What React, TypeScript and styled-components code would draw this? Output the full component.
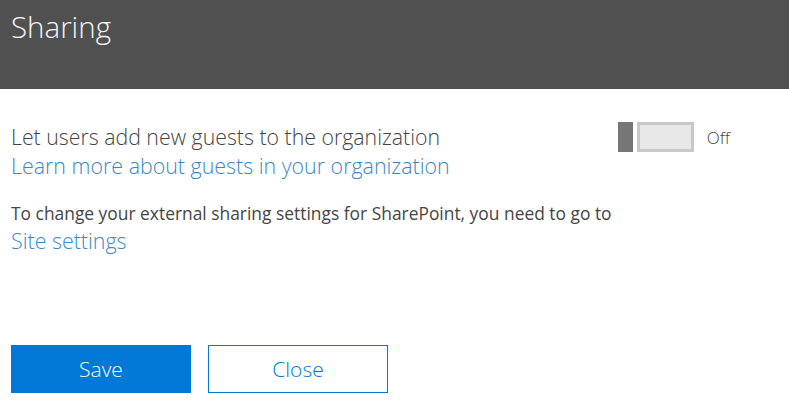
import React from "react";
import styled, { createGlobalStyle } from "styled-components";

const Global = createGlobalStyle`
  html, body { margin: 0; padding: 0; background: #ffffff; }
  body { font-family: "Open Sans", "Noto Sans", sans-serif; }
`;

const Page = styled.div`
  width: 789px;
  height: 411px;
  display: flex;
  flex-direction: column;
  background: #fff;
  overflow: hidden;
`;

const Header = styled.header`
  height: 89px;
  background: #505050;
  padding: 7px 11px 0;
  box-sizing: border-box;
`;

const Title = styled.h1`
  margin: 0;
  font-size: 29.5px;
  font-weight: 300;
  line-height: 40px;
  color: #f4f4f4;
`;

const Body = styled.div`
  padding: 33px 11px 0;
  display: flex;
  flex-direction: column;
`;

const SettingRow = styled.div`
  display: flex;
  align-items: flex-start;
  justify-content: space-between;
  width: 719px;
`;

const Texts = styled.div`
  display: flex;
  flex-direction: column;
`;

const Label = styled.div`
  font-size: 21.3px;
  font-weight: 300;
  line-height: 29px;
  color: #444;
`;

const Link = styled.a`
  font-size: 21.4px;
  font-weight: 300;
  line-height: 29px;
  color: #3a87cc;
  text-decoration: none;
`;

const ToggleWrap = styled.div`
  display: flex;
  align-items: center;
  gap: 13px;
`;

const Toggle = styled.div`
  display: flex;
  gap: 4px;
  height: 30px;
`;

const Thumb = styled.div`
  width: 15px;
  background: #767676;
`;

const Track = styled.div`
  width: 57px;
  box-sizing: border-box;
  border: 3px solid #c8c8c8;
  background: #e8e8e8;
`;

const ToggleLabel = styled.span`
  font-size: 17px;
  font-weight: 300;
  color: #444;
`;

const Note = styled.div`
  margin-top: 20px;
  font-size: 17.4px;
  font-weight: 400;
  line-height: 26px;
  color: #454545;
`;

const Actions = styled.div`
  margin-top: auto;
  padding: 0 11px 18px;
  display: flex;
  gap: 17px;
`;

const Button = styled.button<{ $primary?: boolean }>`
  width: 180px;
  height: 48px;
  box-sizing: border-box;
  font-family: inherit;
  font-size: 21px;
  font-weight: 300;
  cursor: pointer;
  border: 1px solid #0078d7;
  background: ${(p) => (p.$primary ? "#0078d7" : "#ffffff")};
  color: ${(p) => (p.$primary ? "#ffffff" : "#0078d7")};
`;

export default function App() {
  return (
    <Page>
      <Global />
      <Header>
        <Title>Sharing</Title>
      </Header>
      <Body>
        <SettingRow>
          <Texts>
            <Label>Let users add new guests to the organization</Label>
            <Link href="#">Learn more about guests in your organization</Link>
          </Texts>
          <ToggleWrap>
            <Toggle>
              <Thumb />
              <Track />
            </Toggle>
            <ToggleLabel>Off</ToggleLabel>
          </ToggleWrap>
        </SettingRow>
        <Note>To change your external sharing settings for SharePoint, you need to go to</Note>
        <Link href="#">Site settings</Link>
      </Body>
      <Actions>
        <Button $primary>Save</Button>
        <Button>Close</Button>
      </Actions>
    </Page>
  );
}
